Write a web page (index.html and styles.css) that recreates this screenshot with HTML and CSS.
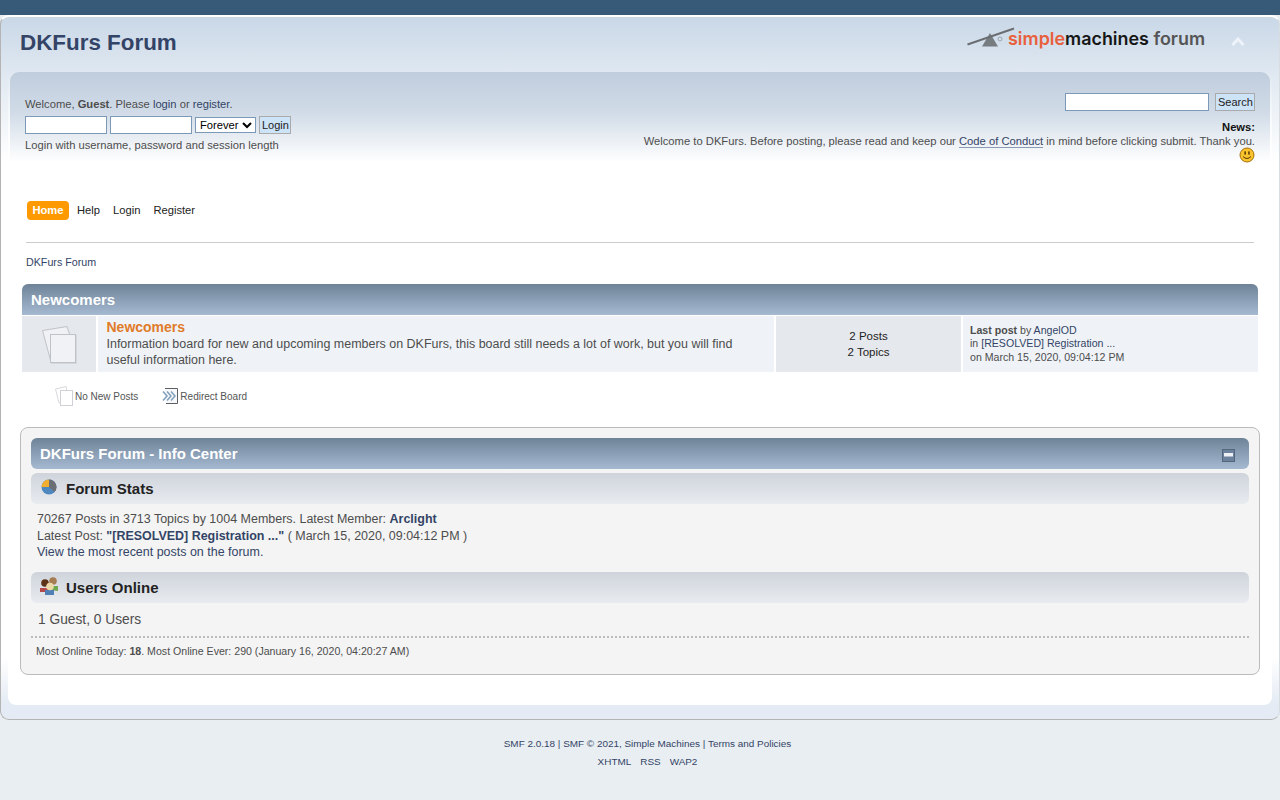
FILE: index.html
```html
<!DOCTYPE html>
<html lang="en">
<head>
<meta charset="utf-8">
<title>DKFurs Forum - Index</title>
<link rel="stylesheet" href="styles.css">
</head>
<body>
<div class="wrapper">
  <header class="header">
    <h1 class="forum-title"><a href="#">DKFurs Forum</a></h1>
    <div class="logo">
      <svg class="logo-mark" viewBox="0 0 48 24" width="48" height="24">
        <path d="M15 19.500 L23 6 L31 19.500Z" fill="#777c80"/>
        <path d="M0.500 17.500 L47 1.500" stroke="#6a6e72" stroke-width="2" fill="none"/>
        <circle cx="33" cy="12" r="2" fill="none" stroke="#8b8f93" stroke-width=".7"/>
      </svg>
      <span class="logo-text"><span class="lg-simple">simple</span><span class="lg-mach">machines</span> <span class="lg-forum">forum</span></span>
      <svg class="collapse" viewBox="0 0 14 11" width="14" height="11"><path d="M1.500 9 L7 3 L12.500 9" fill="none" stroke="#eef3fa" stroke-width="3"/></svg>
    </div>
  </header>
  <div class="inner">
    <section class="upper">
      <div class="user">
        <p class="welcome">Welcome, <strong>Guest</strong>. Please <a href="#">login</a> or <a href="#">register</a>.</p>
        <form class="login-form">
          <input class="field user-field" type="text" aria-label="Username">
          <input class="field user-field" type="password" aria-label="Password">
          <select class="session" aria-label="Session"><option>Forever</option></select>
          <button class="btn" type="button">Login</button>
        </form>
        <p class="login-hint">Login with username, password and session length</p>
      </div>
      <div class="news-col">
        <form class="search-form">
          <input class="field search-field" type="text" aria-label="Search">
          <button class="btn" type="button">Search</button>
        </form>
        <h2 class="news-title">News:</h2>
        <p class="news-text">Welcome to DKFurs. Before posting, please read and keep our <a class="underlined" href="#">Code of Conduct</a> in mind before clicking submit. Thank you.</p>
        <svg class="smiley" viewBox="0 0 16 16" width="16" height="16">
          <circle cx="8" cy="8" r="7" fill="#f8c32c" stroke="#a8710a" stroke-width="1"/>
          <rect x="5.400" y="4.400" width="1.500" height="3.200" fill="#5a3a05"/>
          <rect x="9.200" y="4.400" width="1.500" height="3.200" fill="#5a3a05"/>
          <path d="M4 9.600 Q8 13.400 12 9.600" fill="none" stroke="#5a3a05" stroke-width="1"/>
        </svg>
      </div>
    </section>
    <nav class="menu">
      <a class="menu-item active" href="#">Home</a>
      <a class="menu-item" href="#">Help</a>
      <a class="menu-item" href="#">Login</a>
      <a class="menu-item" href="#">Register</a>
    </nav>
    <div class="crumbs"><a href="#">DKFurs Forum</a></div>
    <section class="category">
      <h3 class="bar-title cat-bar">Newcomers</h3>
      <div class="board">
        <div class="b-icon">
          <svg viewBox="0 0 40 42" width="40" height="42">
            <path d="M2.500 7.500 L27 3.500 L29.500 11 L10.500 37Z" fill="#eff1f4" stroke="#bfc3c8"/>
            <rect x="10.500" y="11.500" width="25" height="28" fill="#f0f2f6" stroke="#bfc3c8"/>
            <path d="M36.500 12 V40.500 H11" fill="none" stroke="#d4d7dc"/>
          </svg>
        </div>
        <div class="b-info">
          <a class="b-name" href="#">Newcomers</a>
          <p class="b-desc">Information board for new and upcoming members on DKFurs, this board still needs a lot of work, but you will find useful information here.</p>
        </div>
        <div class="b-stats"><p>2 Posts</p><p>2 Topics</p></div>
        <div class="b-last">
          <p><strong>Last post</strong> by <a href="#">AngelOD</a></p>
          <p>in <a href="#">[RESOLVED] Registration ...</a></p>
          <p>on March 15, 2020, 09:04:12 PM</p>
        </div>
      </div>
    </section>
    <div class="legend">
      <span class="leg-item">
        <svg viewBox="0 0 18 20" width="18" height="20">
          <path d="M.5 3 L11 .5 L12 6 L12 16 L4 17Z" fill="#fff" stroke="#d6d9dc"/>
          <rect x="5.500" y="4.500" width="12" height="15" fill="#fff" stroke="#cfd2d6"/>
        </svg>No New Posts</span>
      <span class="leg-item">
        <svg viewBox="0 0 16 16" width="16" height="16">
          <path d="M3 .5 H15.500 V15.500 H4" fill="#f7f8f9" stroke="#5c6064"/>
          <path d="M1 3.500 L5 8 L1 12.500 M5 3.500 L9 8 L5 12.500 M9 3.500 L13 8 L9 12.500" fill="none" stroke="#7f9fbd" stroke-width="1.500"/>
        </svg>Redirect Board</span>
    </div>
    <section class="info">
      <h3 class="bar-title info-bar">DKFurs Forum - Info Center
        <svg class="minus" viewBox="0 0 13 13" width="13" height="13">
          <rect x=".5" y=".5" width="12" height="12" fill="#6c819c" stroke="#53667e"/>
          <rect x="2" y="4" width="9" height="3.500" fill="#eef2f7"/>
        </svg>
      </h3>
      <h4 class="sub-bar">
        <svg class="pie" viewBox="0 0 16 16" width="16" height="16">
          <circle cx="8" cy="8" r="7.500" fill="#4f87bf"/>
          <path d="M8 8 V.5 A7.500 7.500 0 0 0 .5 8Z" fill="#f2ae2e"/>
          <path d="M8 8 V.5 A7.500 7.500 0 0 1 13.500 13Z" fill="#6b6f74"/>
        </svg>Forum Stats</h4>
      <div class="stats-text">
        <p>70267 Posts in 3713 Topics by 1004 Members. Latest Member: <a class="strong-link" href="#">Arclight</a></p>
        <p>Latest Post: <a class="strong-link" href="#">"[RESOLVED] Registration ..."</a> ( March 15, 2020, 09:04:12 PM )</p>
        <p><a href="#">View the most recent posts on the forum.</a></p>
      </div>
      <h4 class="sub-bar">
        <svg viewBox="0 0 18 18" width="18" height="18">
          <circle cx="13" cy="4" r="3.800" fill="#a67c52"/>
          <path d="M10 13 V9 H18 V14Z" fill="#6ea84f"/>
          <circle cx="5" cy="6" r="3.800" fill="#5c3317"/>
          <path d="M0 15 V11 H8 V15Z" fill="#b44a4a"/>
          <path d="M5 18 V13 H14 V18Z" fill="#4f7fb5"/>
          <circle cx="10" cy="9.500" r="3.800" fill="#ecd9a8"/>
        </svg>Users Online</h4>
      <p class="online-count">1 Guest, 0 Users</p>
      <p class="online-most">Most Online Today: <strong>18</strong>. Most Online Ever: 290 (January 16, 2020, 04:20:27 AM)</p>
    </section>
  </div>
</div>
<footer class="footer">
  <p><a href="#">SMF 2.0.18</a> | <a href="#">SMF © 2021, Simple Machines</a> | <a href="#">Terms and Policies</a></p>
  <p class="foot-links"><a href="#">XHTML</a><a href="#">RSS</a><a href="#">WAP2</a></p>
</footer>
</body>
</html>
```

FILE: styles.css
```css
* { box-sizing: border-box; }
html, body { margin: 0; padding: 0; }
body {
  height: 800px;
  overflow: hidden;
  padding-top: 15px;
  background: linear-gradient(#375a78 0, #375a78 15px, #e9eef2 15px);
  font-family: "Liberation Sans", Arial, sans-serif;
  font-size: 11.2px;
  color: #4d4d4d;
}
p, h1, h2, h3, h4 { margin: 0; }
a { color: #334466; text-decoration: none; }

.wrapper {
  height: 705px;
  border: 1px solid #b4b4b4;
  border-top: 2px solid #fff;
  border-right-color: #d8dde2;
  border-radius: 9px;
  background: linear-gradient(#c9d7e7 0, #dfe8f1 55px, #fff 145px, #fff 640px, #e4ebf4 688px);
}

.header {
  height: 55px;
  display: flex;
  justify-content: space-between;
  padding: 0 34px 0 19px;
}
.forum-title { font-size: 22.4px; line-height: 26px; padding-top: 13px; font-weight: bold; }
.forum-title a { color: #334466; }
.logo { display: flex; align-items: flex-start; padding-top: 10px; }
.logo-mark { margin-right: -7px; }
.logo-text { font-family: Inter, Lato, sans-serif; font-size: 17.9px; line-height: 24px; font-weight: 600; color: #111; white-space: nowrap; }
.lg-simple { color: #e95f3c; }
.lg-mach { color: #161616; }
.lg-forum { color: #555; }
.collapse { margin: 9px 0 0 26px; }

.inner {
  margin: 0 7px;
  height: 633px;
  border-radius: 0 0 8px 8px;
  background: linear-gradient(rgba(255,255,255,0) 0, #fff 90px);
}
.upper {
  display: flex;
  justify-content: space-between;
  margin: 0 2px;
  height: 118px;
  padding: 21px 15px 0 15px;
  border-radius: 9px 9px 0 0;
  background: linear-gradient(#c0cddd 0, #d0dbe7 40px, #fff 90px);
}
.welcome { line-height: 14px; margin-top: 4px; }
.login-form { display: flex; gap: 3px; margin-top: 5px; height: 18px; align-items: center; }
.field { border: 1px solid #7c9ab8; background: #fff; padding: 0; height: 18px; }
.user-field { width: 82px; }
.session { width: 61px; height: 16px; border: 1px solid #7c9ab8; background: #fff; padding: 0; font: 11.2px "Liberation Sans", Arial, sans-serif; color: #000; }
.btn { border: 1px solid #aaa; background: #cde3f7; color: #222; padding: 0 2px; width: 32px; height: 18px; font: 11px "Liberation Sans", Arial, sans-serif; }
.search-form .btn { width: 40px; }
.login-hint { line-height: 14px; margin-top: 4px; }

.news-col { display: flex; flex-direction: column; align-items: flex-end; }
.search-form { display: flex; gap: 6px; }
.search-field { width: 144px; }
.news-title { font-size: 11.2px; font-weight: bold; color: #111; line-height: 14px; margin-top: 9px; }
.news-text { font-size: 11.22px; line-height: 14px; }
.underlined { border-bottom: 1px solid #8a9bb3; }
.smiley { margin-top: -1px; }

.menu { display: flex; align-items: center; margin: 4px 18px 0; height: 49px; padding: 0 0 16px 1px; border-bottom: 1px solid #ccc; }
.menu-item { font-size: 11.2px; color: #222; line-height: 19px; height: 19px; padding: 0 5px 0 8px; }
.menu-item.active { background: #fe9a00; color: #fff; font-weight: bold; border-radius: 4px; width: 42px; text-align: center; padding: 0; }

.crumbs { padding: 13px 0 0 18px; line-height: 13px; height: 41px; }
.crumbs a { font-size: 10.7px; }

.category { margin: 0 14px; }
.bar-title { color: #fff; font-weight: bold; font-size: 15px; background: linear-gradient(#6f8398, #a5bad1); }
.cat-bar { height: 31px; line-height: 31px; padding-left: 9px; border-radius: 6px 6px 0 0; }
.board {
  display: grid;
  grid-template-columns: 74px 676px 185px 295px;
  gap: 2px;
  height: 56px;
  margin-top: 1px;
}
.b-icon { background: #e5e8ed; display: flex; align-items: center; justify-content: center; padding-left: 2px; }
.b-info { background: #eff3f7; padding: 3px 8px 0 8.500px; }
.b-name { display: block; font-size: 14px; line-height: 16px; font-weight: bold; color: #e07b2a; margin-bottom: 1px; }
.b-desc { font-size: 12.48px; line-height: 16px; color: #4d4d4d; }
.b-stats { background: #e5e8ed; text-align: center; color: #222; line-height: 16px; padding-top: 12px; font-size: 11.500px; }
.b-last { background: #eff3f7; padding: 7.500px 7px 0; line-height: 13.500px; font-size: 10.6px; }

.legend { display: flex; gap: 24px; padding: 15px 0 0 47px; height: 55px; font-size: 10px; line-height: 16px; color: #555; }
.leg-item { display: flex; align-items: center; height: 20px; gap: 2px; }
.leg-item svg { margin-top: -2px; }

.info {
  margin: 0 12px;
  height: 248px;
  padding: 10px 10px 0;
  border: 1px solid #bbb;
  border-radius: 8px;
  background: #f4f4f4;
}
.info-bar { display: flex; justify-content: space-between; align-items: center; height: 31px; padding: 0 14px 0 9px; border-radius: 6px; }
.minus { margin-top: 4px; }
.sub-bar { display: flex; align-items: center; gap: 8px; height: 31px; margin-top: 4px; padding: 0 9px; border-radius: 6px; background: linear-gradient(#cfd4dc, #e8ebef); color: #222; font-size: 15px; font-weight: bold; }
.sub-bar svg { margin-top: -4px; flex: none; }
.sub-bar .pie { margin-left: 1px; margin-right: 1px; }
.stats-text { padding: 7px 6px 0; font-size: 12.48px; line-height: 16.500px; height: 64px; }
.strong-link { font-weight: bold; }
.online-count { padding: 8px 7px 0; font-size: 13.76px; line-height: 17px; height: 35px; border-bottom: 2px dotted #bbb; }
.online-most { padding: 6px 5px 0; line-height: 14px; font-size: 10.6px; }

.footer { text-align: center; padding: 15px 0 0 15px; font-size: 9.94px; line-height: 18px; color: #334466; }
.foot-links { display: flex; justify-content: center; gap: 9px; }
```
